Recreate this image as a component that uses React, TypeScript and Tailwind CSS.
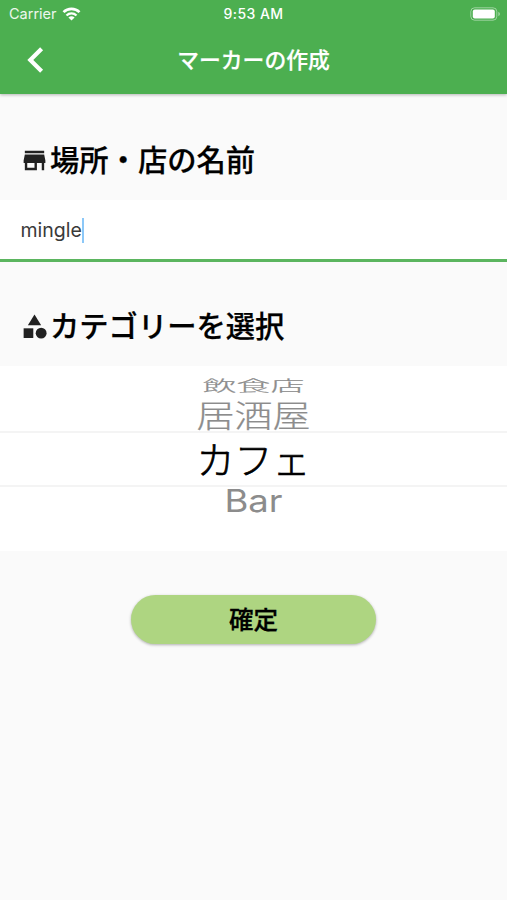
import React, { useState } from 'react';
import { MdStore, MdCategory } from 'react-icons/md';

const StatusBar = () => {
  return (
    <div className="grid h-[27px] grid-cols-3 items-center text-white">
      <div className="flex items-center gap-[5px] pl-[9px]">
        <span className="pt-[1px] text-[14.5px] leading-none text-white/90">Carrier</span>
        <svg width="19" height="14" viewBox="0 0 18 14" fill="none" stroke="white" strokeWidth="2.6">
          <path d="M1 5.2C5.4.7 12.6.7 17 5.2" />
          <path d="M4 8.5c2.8-2.8 7.2-2.8 10 0" strokeWidth="2.3" />
          <path d="M9 13.6 5.9 10.6a4.5 4.5 0 0 1 6.2 0Z" fill="white" stroke="none" />
        </svg>
      </div>
      <span className="pt-[1px] text-center text-[14px] leading-none font-medium tracking-[0.45px]">9:53 AM</span>
      <div className="flex justify-end pr-[6px]">
        <svg width="31" height="14" viewBox="0 0 31 14">
          <rect x="0.8" y="0.8" width="26" height="12.4" rx="3.8" fill="none" stroke="white" strokeOpacity="0.45" />
          <rect x="2.8" y="2.5" width="22" height="9" rx="2" fill="white" />
          <path d="M28.4 4.8c2 .8 2 3.6 0 4.4Z" fill="white" fillOpacity="0.5" />
        </svg>
      </div>
    </div>
  );
};

const SectionTitle = ({ icon, title }: { icon: React.ReactNode; title: string }) => {
  return (
    <h2 className="flex items-center pl-[20px] text-[29.3px] leading-[40px] font-medium text-black">
      <span className="text-[#212121]">{icon}</span>
      <span className="pt-[2px] pl-[1px] [-webkit-text-stroke:0.25px_black]">{title}</span>
    </h2>
  );
};

const App = () => {
  const [name, setName] = useState<string>('mingle');

  return (
    <div className="flex h-[900px] flex-col bg-[#fafafa] font-['Inter','Noto_Sans_CJK_JP',sans-serif]">
      <header className="z-10 h-[94px] bg-[#4caf50] shadow-[0_1px_3px_rgba(0,0,0,0.28)]">
        <StatusBar />
        <div className="grid h-[66px] grid-cols-[60px_1fr_60px] items-center text-white">
          <button className="pl-[27px]" aria-label="back">
            <svg width="17" height="26" viewBox="0 0 17 26" fill="none" stroke="white" strokeWidth="4.2">
              <path d="M14.6 1.8 3.3 13l11.3 11.2" />
            </svg>
          </button>
          <h1 className="pt-[2px] text-center text-[21.8px] leading-none font-medium [-webkit-text-stroke:0.2px_white]">
            マーカーの作成
          </h1>
        </div>
      </header>

      <div className="pt-[45px] pb-[19px]">
        <SectionTitle icon={<MdStore size={29} />} title="場所・店の名前" />
      </div>
      <label className="flex h-[62px] items-center border-b-3 border-[#5bb55f] bg-white pl-[20.5px]">
        <span className="pt-[3px] text-[19.5px] leading-none text-[#3a3a3a]">{name}</span>
        <span className="mt-[2px] h-[25px] w-[2px] bg-[#8cc8f8]" />
      </label>

      <div className="pt-[43px] pb-[19px]">
        <SectionTitle icon={<MdCategory size={29} />} title="カテゴリーを選択" />
      </div>
      <div className="flex h-[185px] flex-col items-center bg-white text-[38px] text-[#8c8c8c]">
        <div className="flex h-[39px] items-center">
          <span className="scale-y-[0.42] text-[34px] leading-none font-light [-webkit-text-stroke:0.4px_#8c8c8c]">
            飲食店
          </span>
        </div>
        <div className="flex h-[26px] items-center pb-[4px]">
          <span className="scale-y-[0.81] leading-none font-light [-webkit-text-stroke:0.3px_#8c8c8c]">居酒屋</span>
        </div>
        <div className="flex h-[56px] w-full items-center justify-center border-y-2 border-[#f4f4f4] text-black">
          <span className="pt-[2px] leading-none font-light [-webkit-text-stroke:0.65px_black]">カフェ</span>
        </div>
        <div className="flex h-[29px] items-center">
          <span className="scale-y-[0.85] text-[36.5px] leading-none">Bar</span>
        </div>
      </div>

      <button
        className="mx-auto mt-[44px] h-[49px] w-[245px] rounded-full bg-[#aed581] pt-[2px] text-[24.5px] leading-none font-medium text-black shadow-[0_1px_3px_rgba(0,0,0,0.3)] [-webkit-text-stroke:0.3px_black]"
        onClick={() => setName(name)}
      >
        確定
      </button>
    </div>
  );
};

export default App;
